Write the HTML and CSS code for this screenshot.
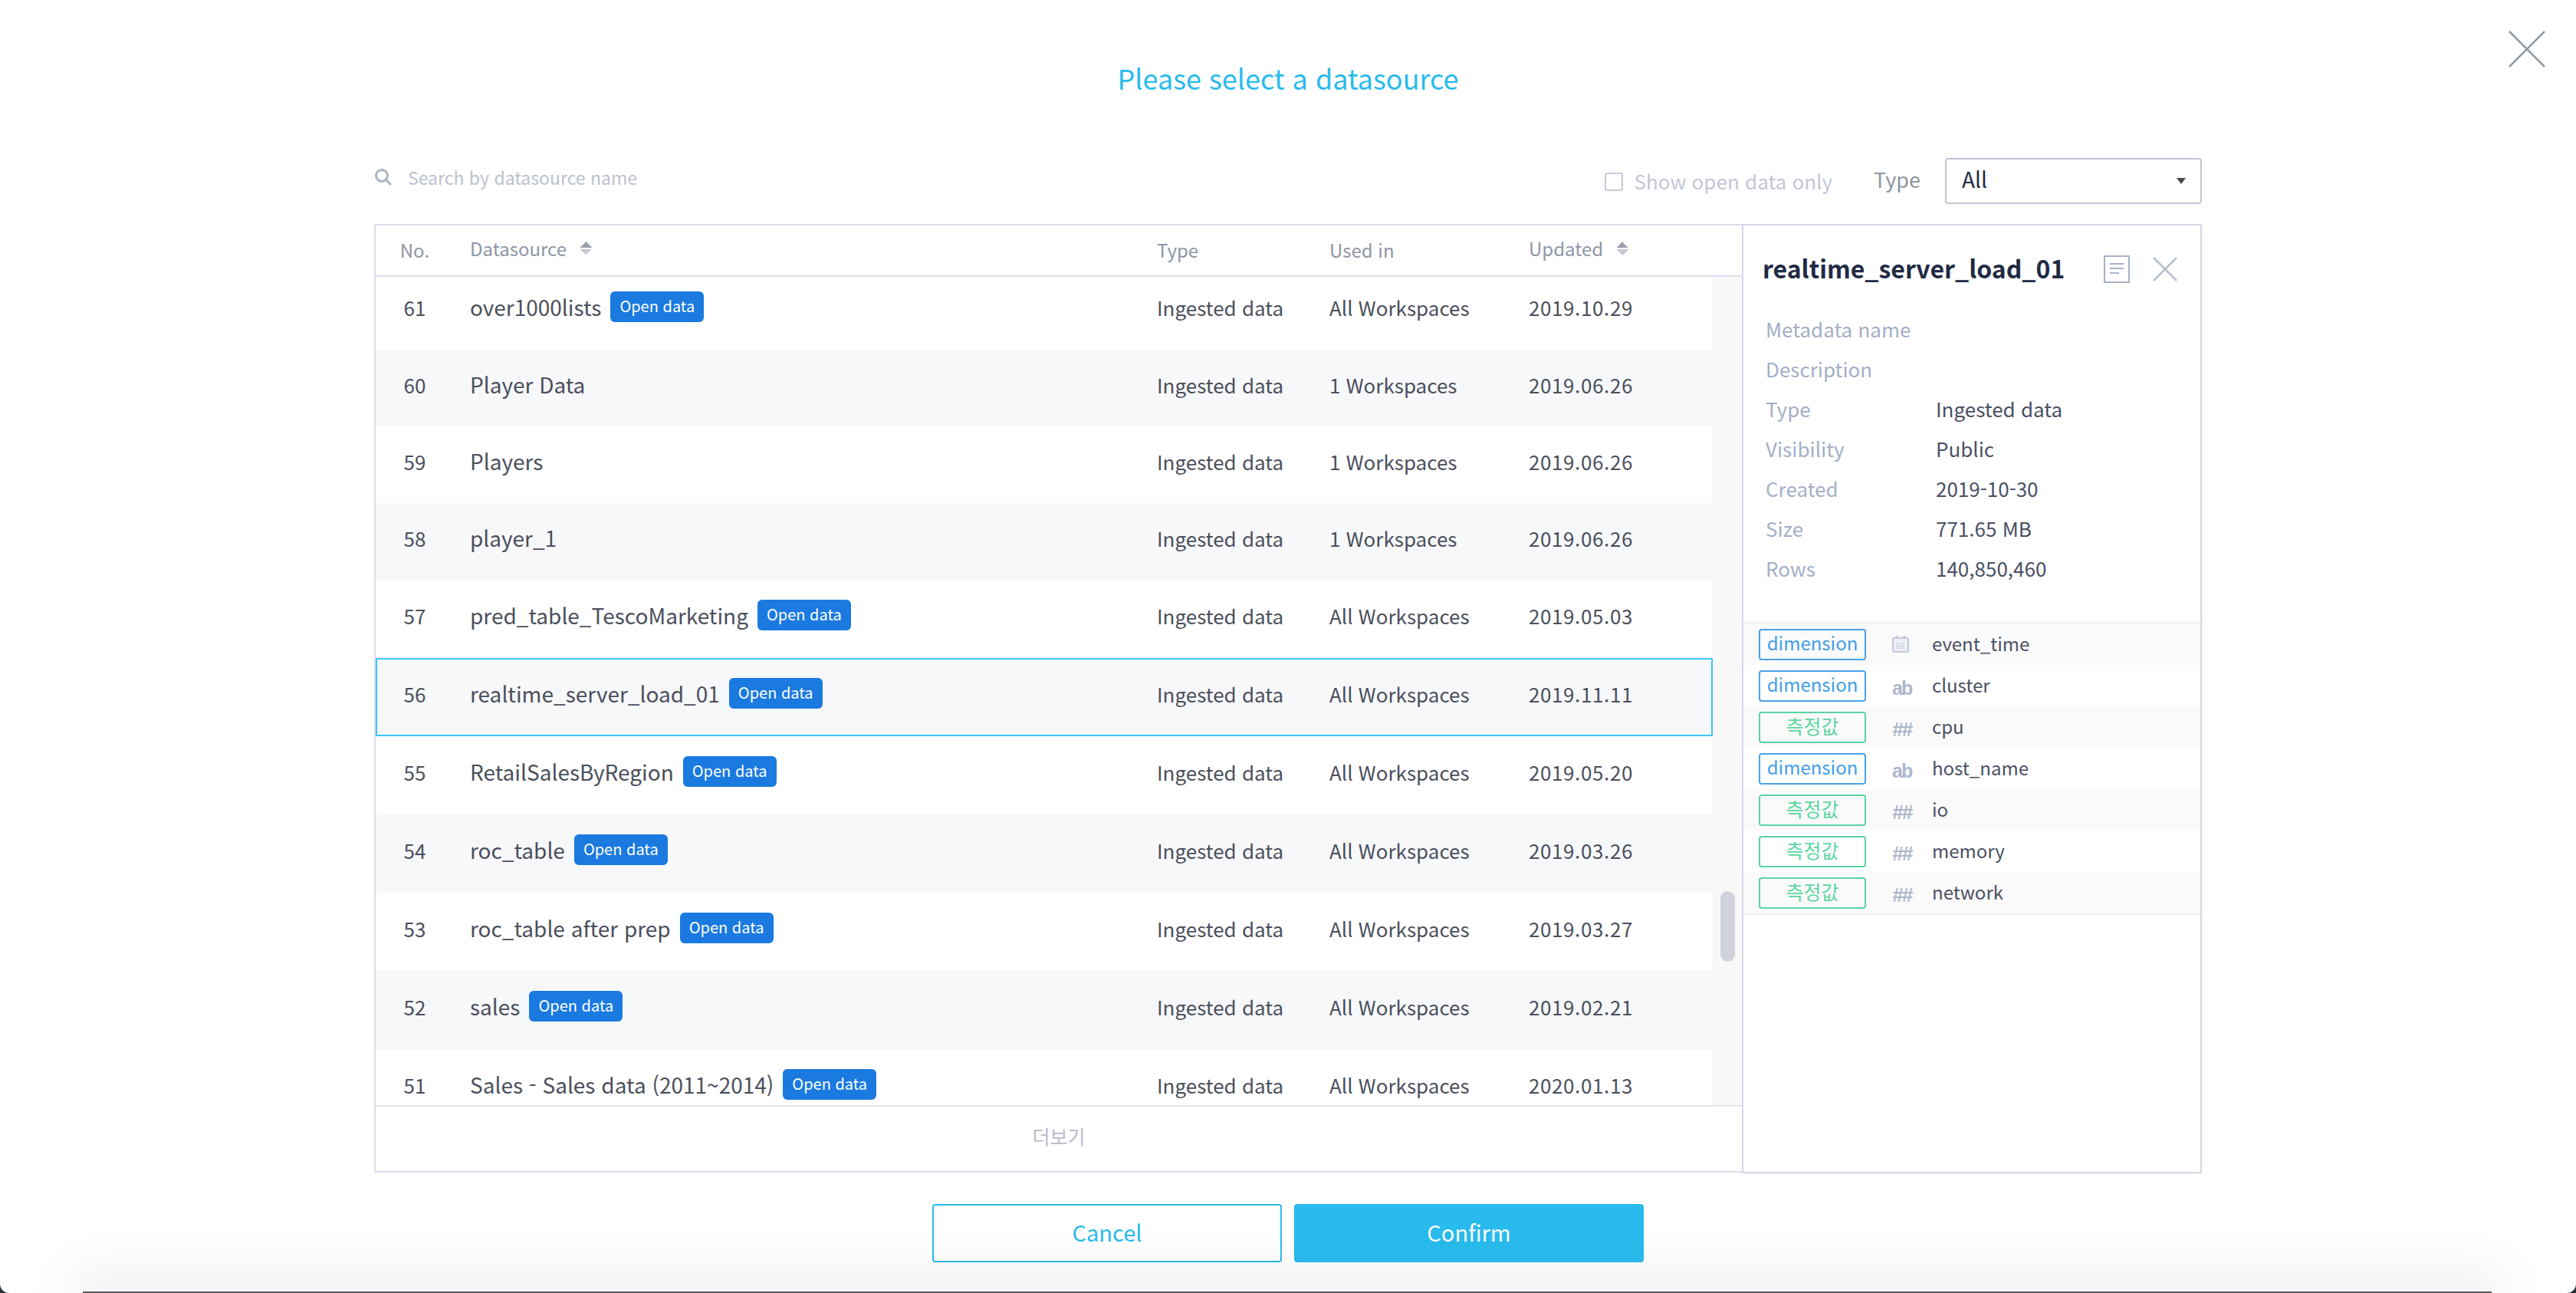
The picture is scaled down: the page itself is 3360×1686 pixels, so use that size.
FILE: index.html
```html
<!DOCTYPE html>
<html lang="ko">
  <head>
    <meta charset="UTF-8" />
    <meta name="viewport" content="width=device-width, initial-scale=1.0" />
    <title>Please select a datasource</title>
    <link rel="stylesheet" href="styles.css">
  </head>
  <body>
    <div class="modal">
      <button class="modal-close" aria-label="Close">
        <svg width="48" height="48" viewBox="0 0 48 48"><path d="M1 1L47 47M47 1L1 47" /></svg>
      </button>

      <h1 class="modal-title">Please select a datasource</h1>

      <div class="toolbar">
        <div class="search">
          <svg width="24" height="24" viewBox="0 0 24 24"><circle cx="10" cy="10" r="7.5" /><path d="M15.5 15.5L22 22" /></svg>
          <span>Search by datasource name</span>
        </div>
        <label class="open-only"><span class="checkbox"></span>Show open data only</label>
        <span class="type-label">Type</span>
        <div class="select">All<span class="caret"></span></div>
      </div>

      <div class="content">
        <section class="table">
          <div class="table-head">
            <span class="c-no low">No.</span>
            <span class="c-name">Datasource <i class="sort"></i></span>
            <span class="c-type low">Type</span>
            <span class="c-used low">Used in</span>
            <span class="c-date">Updated <i class="sort"></i></span>
          </div>

          <div class="table-body">
            <div class="rows">
              <div class="row badge-row">
                <span class="c-no">61</span>
                <span class="c-name">over1000lists <b class="badge">Open data</b></span>
                <span class="c-type">Ingested data</span>
                <span class="c-used">All Workspaces</span>
                <span class="c-date">2019.10.29</span>
              </div>
              <div class="row alt">
                <span class="c-no">60</span>
                <span class="c-name">Player Data</span>
                <span class="c-type">Ingested data</span>
                <span class="c-used">1 Workspaces</span>
                <span class="c-date">2019.06.26</span>
              </div>
              <div class="row">
                <span class="c-no">59</span>
                <span class="c-name">Players</span>
                <span class="c-type">Ingested data</span>
                <span class="c-used">1 Workspaces</span>
                <span class="c-date">2019.06.26</span>
              </div>
              <div class="row alt">
                <span class="c-no">58</span>
                <span class="c-name">player_1</span>
                <span class="c-type">Ingested data</span>
                <span class="c-used">1 Workspaces</span>
                <span class="c-date">2019.06.26</span>
              </div>
              <div class="row badge-row">
                <span class="c-no">57</span>
                <span class="c-name">pred_table_TescoMarketing <b class="badge">Open data</b></span>
                <span class="c-type">Ingested data</span>
                <span class="c-used">All Workspaces</span>
                <span class="c-date">2019.05.03</span>
              </div>
              <div class="row badge-row alt selected">
                <span class="c-no">56</span>
                <span class="c-name">realtime_server_load_01 <b class="badge">Open data</b></span>
                <span class="c-type">Ingested data</span>
                <span class="c-used">All Workspaces</span>
                <span class="c-date">2019.11.11</span>
              </div>
              <div class="row badge-row">
                <span class="c-no">55</span>
                <span class="c-name">RetailSalesByRegion <b class="badge">Open data</b></span>
                <span class="c-type">Ingested data</span>
                <span class="c-used">All Workspaces</span>
                <span class="c-date">2019.05.20</span>
              </div>
              <div class="row badge-row alt">
                <span class="c-no">54</span>
                <span class="c-name">roc_table <b class="badge">Open data</b></span>
                <span class="c-type">Ingested data</span>
                <span class="c-used">All Workspaces</span>
                <span class="c-date">2019.03.26</span>
              </div>
              <div class="row badge-row">
                <span class="c-no">53</span>
                <span class="c-name">roc_table after prep <b class="badge">Open data</b></span>
                <span class="c-type">Ingested data</span>
                <span class="c-used">All Workspaces</span>
                <span class="c-date">2019.03.27</span>
              </div>
              <div class="row badge-row alt">
                <span class="c-no">52</span>
                <span class="c-name">sales <b class="badge">Open data</b></span>
                <span class="c-type">Ingested data</span>
                <span class="c-used">All Workspaces</span>
                <span class="c-date">2019.02.21</span>
              </div>
              <div class="row badge-row">
                <span class="c-no">51</span>
                <span class="c-name">Sales - Sales data (2011~2014) <b class="badge">Open data</b></span>
                <span class="c-type">Ingested data</span>
                <span class="c-used">All Workspaces</span>
                <span class="c-date">2020.01.13</span>
              </div>
            </div>
            <div class="scroll-thumb"></div>
          </div>

          <div class="table-foot">더보기</div>
        </section>

        <aside class="detail">
          <div class="detail-head">
            <h2>realtime_server_load_01</h2>
            <svg class="doc-icon" width="34" height="36" viewBox="0 0 34 36"><rect x="1" y="1" width="32" height="34" /><path d="M8 11H26M8 17H26M8 23H20" /></svg>
            <svg class="x-icon" width="32" height="32" viewBox="0 0 32 32"><path d="M1 1L31 31M31 1L1 31" /></svg>
          </div>

          <dl class="meta">
            <div><dt>Metadata name</dt><dd></dd></div>
            <div><dt>Description</dt><dd></dd></div>
            <div><dt>Type</dt><dd>Ingested data</dd></div>
            <div><dt>Visibility</dt><dd>Public</dd></div>
            <div><dt>Created</dt><dd>2019-10-30</dd></div>
            <div><dt>Size</dt><dd>771.65 MB</dd></div>
            <div><dt>Rows</dt><dd>140,850,460</dd></div>
          </dl>

          <ul class="fields">
            <li>
              <span class="tag dim">dimension</span>
              <span class="ftype">
                <svg width="22" height="22" viewBox="0 0 22 22"><rect x="1" y="3" width="20" height="18" rx="2" /><path class="cal-ticks" d="M6 0V4M16 0V4" /><path class="cal-dots" d="M5 10H17M5 13H17M5 16H17" /></svg>
              </span>
              <span class="fname">event_time</span>
            </li>
            <li>
              <span class="tag dim">dimension</span>
              <span class="ftype ab">ab</span>
              <span class="fname">cluster</span>
            </li>
            <li>
              <span class="tag measure">측정값</span>
              <span class="ftype num">##</span>
              <span class="fname">cpu</span>
            </li>
            <li>
              <span class="tag dim">dimension</span>
              <span class="ftype ab">ab</span>
              <span class="fname">host_name</span>
            </li>
            <li>
              <span class="tag measure">측정값</span>
              <span class="ftype num">##</span>
              <span class="fname">io</span>
            </li>
            <li>
              <span class="tag measure">측정값</span>
              <span class="ftype num">##</span>
              <span class="fname">memory</span>
            </li>
            <li>
              <span class="tag measure">측정값</span>
              <span class="ftype num">##</span>
              <span class="fname">network</span>
            </li>
          </ul>
        </aside>
      </div>

      <div class="actions">
        <button class="btn btn-line">Cancel</button>
        <button class="btn btn-fill">Confirm</button>
      </div>

      <div class="bottom-edge"></div>
    </div>
  </body>
</html>
```

FILE: styles.css
```css
html,
body {
  height: 100%;
}

body {
  margin: 0;
  background: #2b2e35;
  color: #4b4f5c;
  font-family: "Noto Sans CJK KR", "Noto Sans", sans-serif;
  font-size: 26px;
  overflow: hidden;
}

button {
  font-family: inherit;
  cursor: pointer;
}

.modal {
  position: relative;
  height: 1686px;
  box-sizing: border-box;
  background: #fff;
  border-radius: 0 0 12px 12px;
  overflow: hidden;
  display: flex;
  flex-direction: column;
  align-items: center;
}

.modal-close {
  position: absolute;
  top: 40px;
  right: 40px;
  width: 48px;
  height: 48px;
  padding: 0;
  border: 0;
  background: none;
}

.modal-close svg {
  display: block;
  fill: none;
  stroke: #8f99a1;
  stroke-width: 2.5;
}

.modal-title {
  margin: 0 0 4px;
  height: 202px;
  line-height: 202px;
  font-size: 36px;
  font-weight: 400;
  color: #29bbed;
}

/* search + filters */
.toolbar {
  width: 2384px;
  height: 60px;
  display: flex;
  align-items: center;
  color: #c2c6d6;
}

.search {
  display: flex;
  align-items: center;
  gap: 20px;
  margin-right: auto;
  padding-bottom: 10px;
  font-size: 23px;
  color: #bcc1d0;
}

.search svg {
  fill: none;
  stroke: #aeb3c0;
  stroke-width: 3;
}

.open-only {
  display: flex;
  align-items: center;
  gap: 15px;
  padding-bottom: 2px;
}

.checkbox {
  width: 20px;
  height: 20px;
  margin-top: 3px;
  border: 2px solid #c6cadc;
  border-radius: 3px;
}

.type-label {
  margin: 0 32px 0 54px;
  padding-bottom: 5px;
  color: #8f95a0;
  font-size: 27px;
}

.select {
  position: relative;
  width: 335px;
  height: 60px;
  box-sizing: border-box;
  padding-left: 20px;
  font-size: 28px;
  line-height: 50px;
  border: 2px solid #c0c5d4;
  border-radius: 4px;
  color: #1f2a44;
}

.caret {
  position: absolute;
  top: 24px;
  right: 19px;
  border-top: 8px solid #4a4a4e;
  border-left: 6px solid transparent;
  border-right: 6px solid transparent;
}

.content {
  width: 2384px;
  height: 1238px;
  margin-top: 26px;
  display: flex;
}

/* datasource table */
.table {
  width: 1784px;
  height: 1237px;
  box-sizing: border-box;
  border: 2px solid #dadeec;
  border-right: 0;
  display: flex;
  flex-direction: column;
}

.table-head,
.row {
  display: flex;
  align-items: center;
}

.table-head {
  height: 67px;
  flex: none;
  box-sizing: border-box;
  border-bottom: 2px solid #dadeec;
  font-size: 24px;
  color: #8f95a6;
  padding-bottom: 6px;
}

.table-head .low {
  padding-top: 4px;
}

.c-no {
  width: 102px;
  text-align: center;
  flex: none;
}

.c-name {
  width: 917px;
  box-sizing: border-box;
  flex: none;
  padding-left: 21px;
  display: flex;
  align-items: center;
  gap: 12px;
  font-size: 28px;
}

.table-head .c-name {
  font-size: 24px;
  gap: 18px;
}

.c-type {
  width: 225px;
  flex: none;
}

.c-used {
  width: 260px;
  flex: none;
}

.c-date {
  width: 240px;
  flex: none;
  display: flex;
  align-items: center;
  gap: 18px;
}

.row .c-date {
  letter-spacing: 0.6px;
}

.sort {
  width: 15px;
  height: 18px;
  background:
    linear-gradient(to bottom right, transparent 50%, #9aa0ad 50%) 0 0 / 8px 8px no-repeat,
    linear-gradient(to bottom left, transparent 50%, #9aa0ad 50%) 7px 0 / 8px 8px no-repeat,
    linear-gradient(to top right, transparent 50%, #c7cad3 50%) 0 10px / 8px 8px no-repeat,
    linear-gradient(to top left, transparent 50%, #c7cad3 50%) 7px 10px / 8px 8px no-repeat;
}

.table-body {
  position: relative;
  flex: 1;
  overflow: hidden;
  background: #f8f8f9;
}

.rows {
  width: 1744px;
  margin-top: -7px;
}

.row {
  height: 100px;
  box-sizing: border-box;
  background: #fff;
  padding-bottom: 10px;
}

.row.badge-row {
  height: 102px;
}

.row.alt {
  background: #f7f8fa;
}

.row.selected {
  outline: 2px solid #38c8fb;
  outline-offset: -2px;
}

.badge {
  height: 40px;
  line-height: 37px;
  margin-bottom: 1px;
  padding: 0 12px;
  border-radius: 6px;
  background: #1a7ae0;
  color: #fff;
  font-size: 20px;
  font-weight: 400;
}

.scroll-thumb {
  position: absolute;
  top: 801px;
  left: 1754px;
  width: 19px;
  height: 92px;
  border-radius: 10px;
  background: #d0d3da;
}

.table-foot {
  height: 86px;
  flex: none;
  box-sizing: border-box;
  border-top: 2px solid #e3e6f0;
  text-align: center;
  line-height: 76px;
  font-size: 25px;
  color: #b6bbcc;
}

/* detail panel */
.detail {
  width: 600px;
  height: 1238px;
  box-sizing: border-box;
  border: 2px solid #d3d7e5;
}

.detail-head {
  height: 114px;
  display: flex;
  align-items: center;
  padding: 0 30px 0 25px;
}

.detail-head h2 {
  margin: 0 auto 0 0;
  padding-bottom: 4px;
  font-size: 32px;
  font-weight: 700;
  color: #1f2a44;
}

.doc-icon {
  fill: none;
  stroke: #a8b0c6;
  stroke-width: 2;
}

.x-icon {
  margin-left: 30px;
  fill: none;
  stroke: #b9bfd0;
  stroke-width: 2.5;
}

.meta {
  margin: -5px 0 0;
  height: 408px;
}

.meta div {
  display: flex;
  height: 52px;
  line-height: 52px;
  padding-left: 29px;
}

.meta dt {
  width: 222px;
  color: #a4aec7;
}

.meta dd {
  margin: 0;
  color: #4a5064;
}

.fields {
  margin: 0;
  padding: 0;
  list-style: none;
  border-top: 2px solid #eceef4;
  border-bottom: 2px solid #eceef4;
}

.fields li {
  height: 54px;
  display: flex;
  align-items: center;
  padding-left: 20px;
}

.fields li:nth-child(odd) {
  background: #fafafa;
}

.tag {
  width: 140px;
  height: 41px;
  box-sizing: border-box;
  border: 2px solid;
  border-radius: 4px;
  text-align: center;
  line-height: 32px;
}

.tag.dim {
  color: #3f9ee8;
  border-color: #48a2ea;
  font-size: 24px;
}

.tag.measure {
  color: #5cd6a2;
  border-color: #5cd3a0;
  font-size: 25px;
}

.ftype {
  width: 86px;
  padding-left: 34px;
  box-sizing: border-box;
  color: #aeb6cc;
  display: flex;
  align-items: center;
}

.ftype svg {
  fill: #eef0f6;
  stroke: #c3c9da;
  stroke-width: 2;
}

.cal-ticks {
  stroke-width: 3;
}

.cal-dots {
  stroke-dasharray: 2 1;
  stroke-width: 1.5;
}

.ab {
  padding-top: 6px;
  font-family: "Liberation Sans", sans-serif;
  font-weight: 700;
  font-size: 25px;
  letter-spacing: -2px;
}

.num {
  padding-top: 6px;
  font-family: "Liberation Sans", sans-serif;
  font-weight: 700;
  font-style: italic;
  font-size: 26px;
  letter-spacing: -2px;
}

.fname {
  color: #4a5064;
  font-size: 24px;
  padding-bottom: 4px;
}

/* buttons */
.actions {
  display: flex;
  gap: 16px;
  padding-top: 40px;
}

.btn {
  width: 456px;
  height: 76px;
  padding: 0 0 4px;
  border-radius: 4px;
  font-size: 29px;
  border: 2px solid #29bbed;
}

.btn-line {
  background: #fff;
  color: #29bbed;
}

.btn-fill {
  background: #29bbed;
  color: #fff;
}

.bottom-edge {
  position: absolute;
  left: 108px;
  right: 110px;
  bottom: 0;
  height: 2px;
  background: #5a5c60;
  box-shadow: 0 0 70px 14px rgba(0, 0, 0, 0.13);
}
```
